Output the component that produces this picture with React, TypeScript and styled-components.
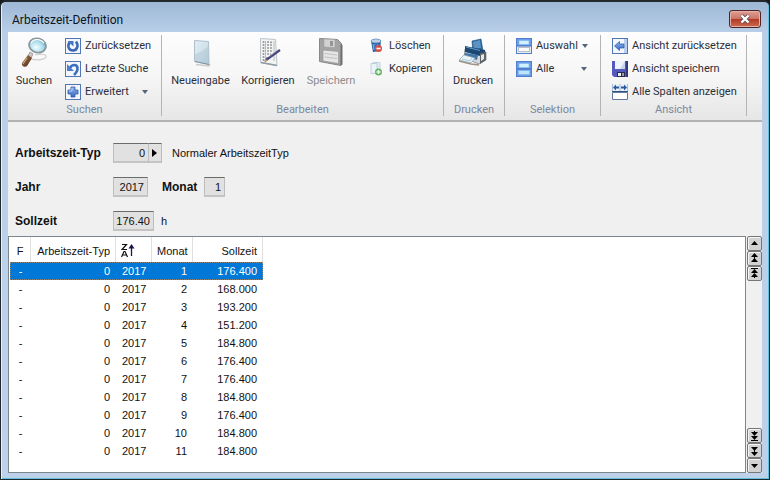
import React from "react";
import styled, { createGlobalStyle, css } from "styled-components";

const GlobalStyle = createGlobalStyle`
  * { box-sizing: border-box; }
  html, body { margin: 0; padding: 0; background: #15191d; }
  button, input { font: inherit; color: inherit; margin: 0; }
`;

const uiFont = `Roboto, sans-serif`;

const Frame = styled.div`
  min-height: 100vh;
  display: flex;
  flex-direction: column;
  padding: 0 6px 6px;
  border: 1px solid #23282e;
  border-top-width: 2px;
  border-radius: 6px 6px 0 0;
  background: linear-gradient(#9db7d5, #b9cfe8 30px, #bdd2ea);
  box-shadow: inset 1px 0 #e4f2fb, inset -1px -1px #5fc0dc;
  font: 11px/16px "Liberation Sans", Arial, sans-serif;
  color: #111;
`;

const TitleBar = styled.header`
  height: 30px;
  display: flex;
  justify-content: space-between;
  align-items: flex-start;
  padding: 8px 2px 0 5px;
`;

const Title = styled.h1`
  margin: 2px 0 0;
  font: 12px/16px Roboto, sans-serif;
  color: #0b1420;
`;

const CloseButton = styled.button`
  width: 32px;
  height: 18px;
  display: flex;
  align-items: center;
  justify-content: center;
  padding: 0;
  border: 1px solid #4f2427;
  border-radius: 3px;
  background: linear-gradient(#dda095, #cc7566 48%, #b23a27 52%, #cc6a50);
  box-shadow: inset 0 0 0 1px #e5b2a8;
`;

const Client = styled.main`
  flex: 1;
  display: flex;
  flex-direction: column;
  margin: 0 1px;
  background: #f0f0f0;
`;

const Ribbon = styled.nav`
  display: flex;
  height: 90px;
  padding: 3px 0;
  border-bottom: 2px solid #b2b2b2;
  background: linear-gradient(#fdfdfd, #f6f6f6 50%, #e6e6e6);
  font-family: ${uiFont};
  color: #2c2f3a;
`;

const Group = styled.section<{ $width: number }>`
  flex: 0 0 ${(p) => p.$width}px;
  display: flex;
  flex-direction: column;
  border-right: 1px solid #b4b4b4;
  height: 81px;
`;

const GroupBody = styled.div`
  display: flex;
  flex: 1;
`;

const GroupLabel = styled.h2`
  margin: 0;
  font: 11px/12px ${uiFont};
  text-align: center;
  color: #7b889f;
`;

const LargeButton = styled.button<{ $width: number }>`
  flex: 0 0 ${(p) => p.$width}px;
  display: flex;
  flex-direction: column;
  align-items: center;
  gap: 4px;
  height: 56px;
  padding: 2px 0 0;
  border: 0;
  background: none;
  white-space: nowrap;
  line-height: 16px;
  &:disabled { color: #8c8c8c; }
`;

const SmallList = styled.div<{ $left?: number }>`
  display: flex;
  flex-direction: column;
  gap: 7px;
  padding: 3px 0 0 ${(p) => p.$left ?? 0}px;
`;

const SmallButton = styled.button<{ $width?: number }>`
  display: flex;
  align-items: center;
  gap: 4px;
  width: ${(p) => (p.$width ? `${p.$width}px` : "auto")};
  height: 16px;
  padding: 0;
  border: 0;
  background: none;
  white-space: nowrap;
  svg { flex: none; }
`;

const Arrow = styled.span`
  margin-left: auto;
  border: 3px solid transparent;
  border-top: 4px solid #56657a;
  border-bottom: 0;
`;

const Form = styled.form`
  display: flex;
  flex-direction: column;
  gap: 14px;
  padding: 21px 7px 5px;
`;

const FieldRow = styled.div`
  display: flex;
  align-items: center;
  height: 20px;
`;

const Label = styled.label<{ $width: number }>`
  width: ${(p) => p.$width}px;
  font-size: 12px;
  font-weight: bold;
`;

const fieldBox = css`
  height: 20px;
  border: 1px solid #bdbdbd;
  border-top-color: #6b6b6b;
  border-bottom: 2px solid #c4c4c4;
  background: #e1e1e1;
`;

const Field = styled.input<{ $width: number }>`
  ${fieldBox}
  width: ${(p) => p.$width}px;
  padding: 1px 3px 0 0;
  border-radius: 0;
  text-align: right;
`;

const LookupButton = styled.button`
  ${fieldBox}
  width: 13px;
  border-left: 0;
  padding: 0 0 0 3px;
  display: flex;
  align-items: center;
`;

const Note = styled.span<{ $gap: number }>`
  margin-left: ${(p) => p.$gap}px;
`;

const Spacer = styled.span`
  width: 14px;
`;

const GridArea = styled.div`
  flex: 1;
  display: flex;
`;

const GridPane = styled.div`
  flex: 1;
  padding: 0 1px;
  border: 1px solid #7f858c;
  background: #fff;
`;

const Table = styled.table`
  table-layout: fixed;
  width: 253px;
  border-collapse: separate;
  border-spacing: 0;
`;

const HeadCell = styled.th<{ $width: number; $align?: string }>`
  width: ${(p) => p.$width}px;
  height: 25px;
  padding: 2px 5px 0;
  border-right: 1px solid #e0e0e0;
  font-weight: normal;
  text-align: ${(p) => p.$align ?? "right"};
  white-space: nowrap;
  svg { display: block; }
`;

const Row = styled.tr<{ $selected: boolean }>`
  ${(p) =>
    p.$selected &&
    css`
      background: #0078d7;
      color: #fff;
      outline: 1px dotted #8c8478;
      outline-offset: -1px;
    `}
`;

const Cell = styled.td<{ $align?: string }>`
  height: 18px;
  padding: 0 6px 1px;
  text-align: ${(p) => p.$align ?? "right"};
  line-height: 16px;
`;

const Scroller = styled.div`
  width: 16px;
  display: flex;
  flex-direction: column;
  justify-content: space-between;
  padding-left: 1px;
`;

const ScrollButton = styled.button`
  display: flex;
  align-items: center;
  justify-content: center;
  width: 15px;
  height: 15px;
  padding: 0;
  border: 1px solid #777;
  border-radius: 2px;
  background: #d2d2d2;
  box-shadow: inset 1px 1px #f5f5f5;
`;

const Magnifier = () => (
  <svg width="32" height="32" viewBox="0 0 32 32">
    <defs>
      <radialGradient id="lens" cx=".45" cy=".65" r=".7">
        <stop offset="0" stopColor="#f4feff" />
        <stop offset=".6" stopColor="#a9dcec" />
        <stop offset="1" stopColor="#5d9db8" />
      </radialGradient>
      <linearGradient id="wood" x1="0" y1="0" x2="1" y2="1">
        <stop offset="0" stopColor="#b88455" />
        <stop offset="1" stopColor="#3c2013" />
      </linearGradient>
    </defs>
    <path d="M13 22c8 2 16 0 15-3-1-2-6-2-11-1" fill="none" stroke="#cdcdcd" strokeWidth="1.200" />
    <path d="M12 15l3 2-2 4-3-2z" fill="#c9c9c9" stroke="#777" strokeWidth=".6" />
    <path d="M10 18l4 3-5 8c-2 2-6 0-5-3z" fill="url(#wood)" />
    <path d="M9 21l-4 6" stroke="#dcb88d" strokeWidth="1" />
    <ellipse cx="19.500" cy="8.500" rx="8.500" ry="7" transform="rotate(15 19.500 8.500)" fill="url(#lens)" stroke="#8c979b" strokeWidth="1.800" />
    <path d="M13 6c2-4 9-5 13 0" fill="none" stroke="#fff" strokeWidth="1.200" />
  </svg>
);

const Sheet = () => (
  <svg width="32" height="32" viewBox="0 0 32 32">
    <defs>
      <linearGradient id="sheet" x1="0" y1="0" x2="1" y2="1">
        <stop offset="0" stopColor="#e3eef4" />
        <stop offset=".55" stopColor="#d0e1ea" />
        <stop offset="1" stopColor="#a9c2d0" />
      </linearGradient>
    </defs>
    <path d="M11 27.500l13 1.500 1-2" fill="none" stroke="#ccc" strokeWidth="1.500" />
    <path d="M9.500 3.500l14 1 .5 23-14.500-3z" fill="url(#sheet)" stroke="#aebfca" />
    <path d="M10 17c4-1 8-3 13.500-8v18L10 24z" fill="#b4ccd9" opacity=".6" />
    <path d="M10 24.500l14 3" stroke="#7c909d" />
  </svg>
);

const EditSheet = () => (
  <svg width="32" height="32" viewBox="0 0 32 32">
    <path d="M8.500 1.500l15 1 1.500 26-16.500-3z" fill="#f1f3f4" stroke="#bcc4c9" />
    <path d="M9 25.500l16 3" stroke="#8b9aa4" strokeWidth="1.500" />
    <path d="M11.500 4v20M15 5l6 .5M15 8h6M15 11h6M15 14h5M15 17h4M14 21h4" stroke="#9b9b9b" strokeWidth="1.700" strokeDasharray="2 1" />
    <path d="M13.500 4v20M22 4v20" stroke="#bbb" />
    <path d="M14 23L28 13" stroke="#44437c" strokeWidth="2.200" />
    <path d="M12.500 24.500l3-1.500" stroke="#b59270" strokeWidth="1.500" />
    <path d="M17 20l9-7" stroke="#8b89bb" strokeWidth=".7" />
  </svg>
);

const GreyDisk = () => (
  <svg width="32" height="32" viewBox="0 0 32 32">
    <path d="M4.500 1.500l18 1 4 4-.5 22-21.500-4z" fill="#a4a4a4" stroke="#888" />
    <path d="M9 2l11 .5v8L9 10z" fill="#d2d2d2" stroke="#999" strokeWidth=".5" />
    <path d="M15 4h3v5h-3z" fill="#969696" />
    <path d="M8 13l15.500 1.500v12L8 24z" fill="#e5e5e5" stroke="#8e8e8e" strokeWidth=".6" />
    <path d="M9.500 16.500L22 18M9.500 20L22 21.500" stroke="#c1c1c1" />
    <path d="M25.500 7v21.500l2-1V8z" fill="#707070" />
  </svg>
);

const Printer = () => (
  <svg width="32" height="32" viewBox="0 0 32 32">
    <path d="M15 4l9-2 2 12-10 2z" fill="#2b669e" stroke="#214d78" strokeWidth=".6" />
    <path d="M16 5l7-2 1 8-7 1z" fill="#5c93c4" />
    <path d="M8 12l13 1 8 2v8l-7 4-15-6z" fill="#d5d9dd" stroke="#71777d" strokeWidth=".7" />
    <path d="M8 9l15 3 5 1v5l-5 1-15-4z" fill="#1c4774" />
    <path d="M9 10l14 3.500" stroke="#629fca" />
    <path d="M23 16l6-1v8l-6 4z" fill="#5e6369" />
    <path d="M24 18l3-1v5l-3 2z" fill="#e9e6de" />
    <path d="M8 16l13 2-1 5-13-4z" fill="#3d75a6" />
    <path d="M7 18l11 3-4 5-12-3z" fill="#e8f4f8" stroke="#91a0a8" strokeWidth=".7" />
    <path d="M5 22l8 2 2-3" fill="none" stroke="#a4cfdf" />
    <path d="M2 24l12 3 8 1" fill="none" stroke="#9b9185" strokeWidth="1.500" />
  </svg>
);

const Tile = ({ children }: { children: React.ReactNode }) => (
  <svg width="16" height="16" viewBox="0 0 16 16">
    <defs>
      <linearGradient id="blue" x1="0" y1="0" x2="0" y2="1">
        <stop offset="0" stopColor="#8fb5ee" />
        <stop offset="1" stopColor="#3a68c4" />
      </linearGradient>
    </defs>
    <rect x=".5" y=".5" width="15" height="15" fill="#f3f7fc" stroke="#5276b3" />
    {children}
  </svg>
);

const ResetIcon = () => (
  <Tile>
    <path d="M11 3.500c3 4 1 9-3 9s-6-4-3.500-8" fill="none" stroke="#3a68b8" strokeWidth="2.600" />
    <path d="M2.500 3h6v5.500z" fill="#4475c5" />
  </Tile>
);
const LastIcon = () => (
  <Tile>
    <path d="M5 7c2-4 7-4 7.500 0 .3 3-1.500 5-3.500 7" fill="none" stroke="#3c6dbd" strokeWidth="2.600" />
    <path d="M2 3v7h7z" fill="#4c7ccb" />
  </Tile>
);
const PlusIcon = () => (
  <Tile>
    <path d="M6 3h4v3h3v4h-3v3H6v-3H3V6h3z" fill="url(#blue)" stroke="#315ba8" strokeWidth=".8" />
    <path d="M7 4v3H4" fill="none" stroke="#b9d1f5" />
  </Tile>
);
const DeleteIcon = () => (
  <svg width="16" height="16" viewBox="0 0 16 16">
    <path d="M2 3l10-1-1 11-7 1z" fill="#2861a8" />
    <ellipse cx="7" cy="3" rx="5" ry="2" fill="#b7d2e8" stroke="#5780ab" strokeWidth=".7" />
    <path d="M4 6l1 6M6 6v3l3 3M9 6L6 11" stroke="#7eb6ea" />
    <circle cx="9.500" cy="10.500" r="3.500" fill="#d64d47" />
    <path d="M7.500 10.500h4" stroke="#fff" strokeWidth="1.600" />
  </svg>
);
const CopyIcon = () => (
  <svg width="16" height="16" viewBox="0 0 16 16">
    <path d="M4 1.500h7v10H4z" fill="#e0ecf3" stroke="#c3d4df" />
    <path d="M2 2.500h6v10H2z" fill="#eaf3f8" stroke="#bed0dc" />
    <circle cx="9.500" cy="11" r="3.500" fill="#69b567" />
    <path d="M9.500 9v4M7.500 11h4" stroke="#eaffea" strokeWidth="1.500" />
  </svg>
);
const SelectIcon = ({ all = false }: { all?: boolean }) => (
  <svg width="16" height="16" viewBox="0 0 16 16">
    <rect x=".5" y=".5" width="15" height="15" fill={all ? "#6a9be8" : "#e7edf5"} stroke="#527fce" />
    <path d="M1 1h14v7H1z" fill="#6a9be8" />
    <rect x="3" y="2.500" width="10" height="4" fill="#d0f2ff" stroke="#86b9ed" strokeWidth=".7" />
    <rect x="2.500" y="9.500" width="11" height="4" fill={all ? "#bce5fc" : "#fdfdfd"} stroke={all ? "#86b9ed" : "#b9bec7"} />
    <path d="M1 8h14" stroke="#3966b8" />
  </svg>
);
const BackIcon = () => (
  <Tile>
    <path d="M12 1h3v14h-3z" fill="#b9cef0" />
    <path d="M2.500 8l5-4.500V6H12v4H7.500v2.500z" fill="url(#blue)" stroke="#2a54a0" strokeWidth=".7" />
  </Tile>
);
const DiskIcon = () => (
  <svg width="16" height="16" viewBox="0 0 16 16">
    <path d="M0 0h16v16H2l-2-2z" fill="#5559bd" />
    <path d="M14 0h2v16h-2z" fill="#343881" />
    <path d="M3 0h10v8H3z" fill="#eef2fc" />
    <path d="M8 8l5-8v8z" fill="#c7d4ee" />
    <path d="M5 11h8v5H5z" fill="#292b4c" />
    <path d="M6 12h3v3H6z" fill="#edf1f6" />
    <path d="M10 12h2v3h-2z" fill="#999fac" />
  </svg>
);
const ColumnsIcon = () => (
  <svg width="16" height="16" viewBox="0 0 16 16">
    <path d="M0 0h16v7H0z" fill="#e8f1fa" />
    <path d="M.5 8.500h15v7H.5z" fill="#fff" stroke="#60799d" />
    <path d="M0 7.500h16" stroke="#325283" />
    <path d="M.5 0v7M15.500 0v7M8 0v7" stroke="#a9bbd6" />
    <path d="M1 3.500l3-3v2h3v2H4v2zM15 3.500l-3-3v2H9v2h3v2z" fill="#28599c" />
  </svg>
);

const SortIcon = () => (
  <svg width="14" height="16" viewBox="0 0 14 16">
    <path d="M1 1.500h4.500L1 6.500h5M.5 14L3 8.500h1L6.500 14M2 12h3.500" fill="none" stroke="#111" strokeWidth="1.200" />
    <path d="M10.500 3v10" stroke="#16164c" strokeWidth="1.300" />
    <path d="M10.500 1l3 4.500h-6z" fill="#16164c" />
  </svg>
);

const CloseGlyph = () => (
  <svg width="12" height="10" viewBox="0 0 12 10">
    <path d="M2.500 1.500l7 7M9.500 1.500l-7 7" stroke="#63505a" strokeWidth="4" />
    <path d="M2.500 1.500l7 7M9.500 1.500l-7 7" stroke="#fff" strokeWidth="2.400" />
  </svg>
);

const RightGlyph = () => (
  <svg width="6" height="8" viewBox="0 0 6 8">
    <path d="M0 0l5 4-5 4z" fill="#000" />
  </svg>
);

type ScrollKind = "line" | "page" | "end";
const scrollPaths: Record<ScrollKind, string> = {
  line: "M5.500 3L9 7H2z",
  page: "M5.500 0L9 4H2zM5.500 5L9 9H2zM5 3h1v4H5z",
  end: "M2 0h7v1H2zM5.500 1L9 5H2zM5.500 5L9 9H2zM5 9h1v1H5z",
};
const ScrollGlyph = ({ kind, down }: { kind: ScrollKind; down: boolean }) => (
  <svg width="11" height="11" viewBox="0 0 11 11">
    <path d={scrollPaths[kind]} transform={down ? "rotate(180 5.500 5.500)" : undefined} fill="#000" />
  </svg>
);

const records = [
  "176.400", "168.000", "193.200", "151.200", "184.800", "176.400",
  "176.400", "184.800", "176.400", "184.800", "184.800",
];

export default function App() {
  const upButtons: ScrollKind[] = ["line", "page", "end"];
  const downButtons: ScrollKind[] = ["end", "page", "line"];
  return (
    <>
      <GlobalStyle />
      <Frame>
        <TitleBar>
          <Title>Arbeitszeit-Definition</Title>
          <CloseButton aria-label="Schließen"><CloseGlyph /></CloseButton>
        </TitleBar>
        <Client>
          <Ribbon>
            <Group $width={154}>
              <GroupBody>
                <LargeButton $width={52}><Magnifier />Suchen</LargeButton>
                <SmallList $left={5}>
                  <SmallButton><ResetIcon />Zurücksetzen</SmallButton>
                  <SmallButton><LastIcon />Letzte Suche</SmallButton>
                  <SmallButton $width={83}><PlusIcon />Erweitert<Arrow /></SmallButton>
                </SmallList>
              </GroupBody>
              <GroupLabel>Suchen</GroupLabel>
            </Group>
            <Group $width={282}>
              <GroupBody>
                <LargeButton $width={77}><Sheet />Neueingabe</LargeButton>
                <LargeButton $width={58}><EditSheet />Korrigieren</LargeButton>
                <LargeButton $width={68} disabled><GreyDisk />Speichern</LargeButton>
                <SmallList $left={4}>
                  <SmallButton><DeleteIcon />Löschen</SmallButton>
                  <SmallButton><CopyIcon />Kopieren</SmallButton>
                </SmallList>
              </GroupBody>
              <GroupLabel>Bearbeiten</GroupLabel>
            </Group>
            <Group $width={61}>
              <GroupBody>
                <LargeButton $width={58}><Printer />Drucken</LargeButton>
              </GroupBody>
              <GroupLabel>Drucken</GroupLabel>
            </Group>
            <Group $width={96}>
              <GroupBody>
                <SmallList $left={11}>
                  <SmallButton $width={71}><SelectIcon />Auswahl<Arrow /></SmallButton>
                  <SmallButton $width={71}><SelectIcon all />Alle<Arrow /></SmallButton>
                </SmallList>
              </GroupBody>
              <GroupLabel>Selektion</GroupLabel>
            </Group>
            <Group $width={146}>
              <GroupBody>
                <SmallList $left={11}>
                  <SmallButton><BackIcon />Ansicht zurücksetzen</SmallButton>
                  <SmallButton><DiskIcon />Ansicht speichern</SmallButton>
                  <SmallButton><ColumnsIcon />Alle Spalten anzeigen</SmallButton>
                </SmallList>
              </GroupBody>
              <GroupLabel>Ansicht</GroupLabel>
            </Group>
          </Ribbon>

          <Form>
            <FieldRow>
              <Label $width={98} htmlFor="typ">Arbeitszeit-Typ</Label>
              <Field $width={36} id="typ" defaultValue="0" />
              <LookupButton type="button" aria-label="Auswählen"><RightGlyph /></LookupButton>
              <Note $gap={10}>Normaler ArbeitszeitTyp</Note>
            </FieldRow>
            <FieldRow>
              <Label $width={98} htmlFor="jahr">Jahr</Label>
              <Field $width={35} id="jahr" defaultValue="2017" />
              <Spacer />
              <Label $width={42} htmlFor="monat">Monat</Label>
              <Field $width={21} id="monat" defaultValue="1" />
            </FieldRow>
            <FieldRow>
              <Label $width={98} htmlFor="soll">Sollzeit</Label>
              <Field $width={41} id="soll" defaultValue="176.40" />
              <Note $gap={7}>h</Note>
            </FieldRow>
          </Form>

          <GridArea>
            <GridPane>
              <Table>
                <thead>
                  <tr>
                    <HeadCell $width={21} $align="center">F</HeadCell>
                    <HeadCell $width={85}>Arbeitszeit-Typ</HeadCell>
                    <HeadCell $width={36} $align="left" aria-label="Jahr"><SortIcon /></HeadCell>
                    <HeadCell $width={41}>Monat</HeadCell>
                    <HeadCell $width={70}>Sollzeit</HeadCell>
                  </tr>
                </thead>
                <tbody>
                  {records.map((hours, i) => (
                    <Row key={i} $selected={i === 0}>
                      <Cell $align="center">-</Cell>
                      <Cell>0</Cell>
                      <Cell $align="left">2017</Cell>
                      <Cell>{i + 1}</Cell>
                      <Cell>{hours}</Cell>
                    </Row>
                  ))}
                </tbody>
              </Table>
            </GridPane>
            <Scroller>
              <div>
                {upButtons.map((k) => (
                  <ScrollButton key={k} aria-label={`Aufwärts ${k}`}><ScrollGlyph kind={k} down={false} /></ScrollButton>
                ))}
              </div>
              <div>
                {downButtons.map((k) => (
                  <ScrollButton key={k} aria-label={`Abwärts ${k}`}><ScrollGlyph kind={k} down /></ScrollButton>
                ))}
              </div>
            </Scroller>
          </GridArea>
        </Client>
      </Frame>
    </>
  );
}
